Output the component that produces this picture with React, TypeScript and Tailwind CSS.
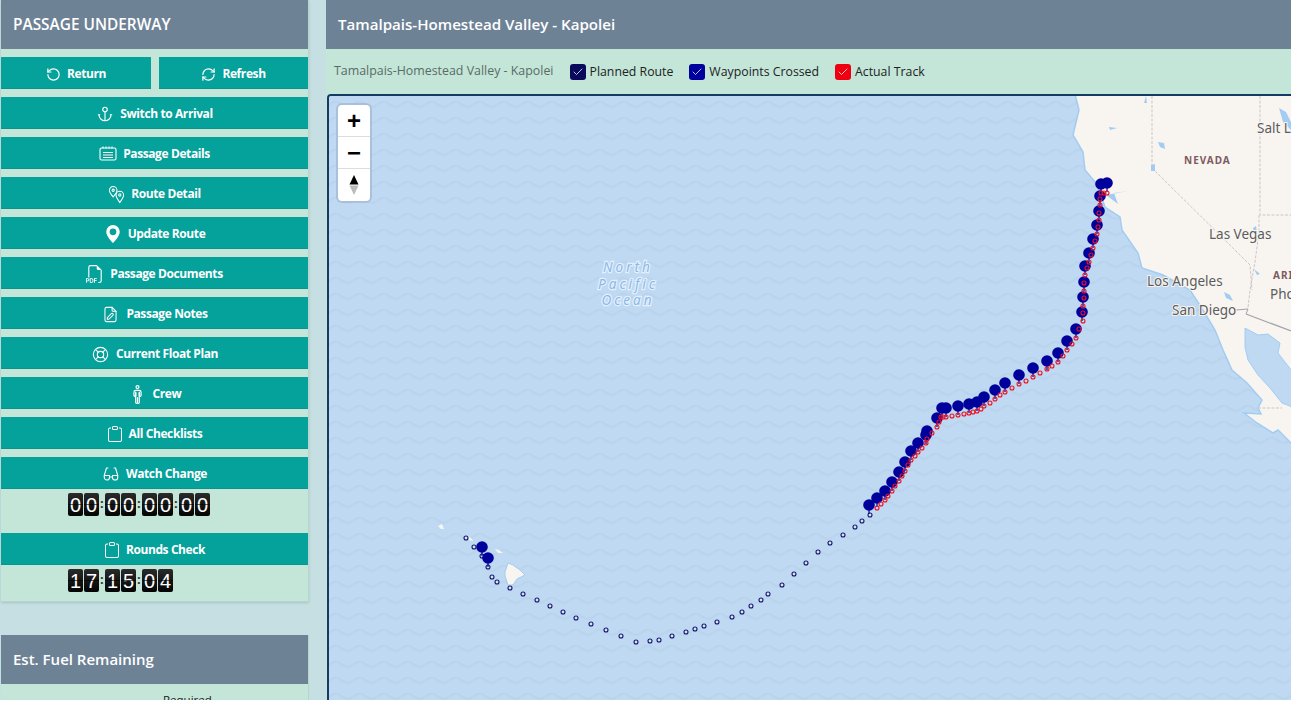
import type { ReactNode } from "react";
import { BsClipboard, BsFiletypePdf, BsGeoAltFill } from "react-icons/bs";
import { IoManOutline } from "react-icons/io5";
import { TbAnchor, TbEyeglass, TbFilePencil, TbLifebuoy } from "react-icons/tb";
import { Check, RefreshCw, RotateCcw } from "lucide-react";

const bigDots = [
  [1107, 183], [1101, 184], [1100, 196], [1099, 211], [1097, 225], [1093, 239], [1089, 253], [1085, 266], [1084, 282], [1083, 297], [1082, 312], [1076, 329], [1067, 341], [1058, 353], [1047, 361], [1033, 368], [1019, 375], [1005, 383], [995, 390], [984, 397], [977, 402], [969, 404], [958, 406], [946, 408], [942, 408], [937, 418], [927, 431], [926, 435], [918, 443], [911, 451], [905, 462], [899, 472], [892, 482], [885, 491], [877, 498], [869, 505], [482, 547], [488, 558],
];

const track = [
  [1101, 193], [1104, 193], [1107, 193], [1100, 199], [1100, 205], [1099, 213], [1099, 220], [1098, 227], [1097, 234], [1095, 241], [1093, 248], [1091, 255], [1089, 262], [1087, 268], [1085, 275], [1084, 283], [1084, 291], [1084, 298], [1083, 306], [1083, 313], [1083, 321], [1079, 329], [1076, 338], [1072, 344], [1067, 350], [1063, 356], [1058, 362], [1052, 366], [1047, 369], [1040, 373], [1033, 377], [1026, 381], [1019, 384], [1012, 388], [1005, 392], [1000, 395], [995, 399], [990, 403], [984, 406], [981, 409], [977, 411], [973, 412], [969, 413], [964, 414], [958, 415], [952, 416], [946, 417], [943, 417], [941, 417], [939, 422], [937, 427], [932, 433], [927, 439], [926, 443], [922, 448], [918, 452], [915, 456], [911, 460], [908, 465], [905, 471], [902, 476], [899, 481], [895, 486], [892, 491], [888, 496], [885, 500], [881, 504], [877, 508],
];

const planned = [
  [870, 515], [862, 521], [855, 527], [843, 535], [830, 543], [818, 552], [806, 563], [794, 574], [782, 585], [768, 594], [761, 600], [751, 606], [742, 612], [732, 617], [717, 622], [704, 626], [695, 629], [686, 632], [672, 636], [659, 640], [650, 641], [636, 642], [621, 636], [606, 630], [591, 624], [576, 618], [563, 612], [550, 606], [537, 600], [523, 594], [510, 588], [497, 582], [492, 577], [488, 567], [482, 556], [474, 547], [466, 538],
];

const land =
  "M1074 90 L1079 110 L1073 135 L1083 152 L1085 170 L1095 182 L1101 195 L1105 207 L1120 217 L1122 230 L1138 253 L1142 268 L1163 275 L1190 290 L1203 310 L1215 330 L1223 350 L1232 370 L1247 383 L1262 400 L1258 408 L1261 414 L1244 413 L1257 423 L1273 433 L1278 430 L1291 443 L1295 443 L1295 90 Z";
const gulf =
  "M1245 328 L1258 335 L1268 334 L1280 343 L1278 353 L1295 375 L1295 408 L1282 403 L1270 388 L1258 375 L1248 360 L1245 347 Z";

function MapCanvas() {
  return (
    <svg viewBox="329 96 962 604" className="block h-[604px] w-[962px]">
      <defs>
        <pattern id="waves" x="329" y="96" width="24" height="16" patternUnits="userSpaceOnUse">
          <path d="M0 9 Q6 3 12 8 T24 9" fill="none" stroke="#bad4ee" strokeWidth="2.5" />
        </pattern>
      </defs>
      <rect x="329" y="96" width="962" height="604" fill="#bfd9f2" />
      <rect x="329" y="96" width="962" height="604" fill="url(#waves)" />

      <path d={land} fill="#f8f5f1" stroke="#a2ccf2" strokeWidth="1.5" />
      <path d={gulf} fill="#bfd9f2" stroke="#a2ccf2" strokeWidth="1" />
      <path d="M508 563 L505 572 L505 576 L508 585 L513 585 L517 579 L525 575 L520 570 L513 565 Z" fill="#f8f5f1" stroke="#a2ccf2" strokeWidth="1" />
      <path d="M438 526 L442 524 L444 529 L441 529 Z M468 536 L472 539 L473 541 L469 540 Z M495 549 L499 550 L503 553 L498 553 Z M484 544 L489 545 L487 547 Z" fill="#f8f5f1" />

      <g fill="none" stroke="#c9c5c6" strokeWidth="1" strokeDasharray="3 1.5">
        <path d="M1152 96 L1152 168 L1250 265 L1252 290" />
        <path d="M1260 96 L1260 215 L1291 215" />
        <path d="M1259 215 L1259 232 L1255 262 L1250 290 L1248 308" />
        <path d="M1258 408 L1282 408" />
      </g>
      <path d="M1246 314 L1291 331" fill="none" stroke="#a5a2ad" strokeWidth="1.3" />
      <path d="M1236 310 L1248 309 L1246 314" fill="none" stroke="#a5a2ad" strokeWidth="1" />
      <g fill="#a2ccf2">
        <path d="M1146 96 L1147 103 L1144 103 Z" />
        <path d="M1109 127 L1117 128 L1110 130 Z" />
        <path d="M1158 142 L1164 143 L1165 149 L1160 147 Z" />
        <path d="M1151 165 L1155 164 L1155 171 L1151 171 Z" />
        <path d="M1279 108 L1286 112 L1291 122 L1291 130 L1283 122 Z" />
        <path d="M1253 228 L1256 226 L1257 233 L1254 232 Z" />
        <path d="M1254 269 L1260 274 L1257 275 Z" />
        <path d="M1224 292 L1230 295 L1233 301 L1226 298 Z" />
        <path d="M1106 195 L1128 191 L1114 193 L1118 204 L1110 198 Z" />
      </g>

      {planned.map(([x, y], i) => (
        <circle key={i} cx={x} cy={y} r="2" fill="#d6e4f6" stroke="#15156e" strokeWidth="1.1" />
      ))}
      {bigDots.map(([x, y], i) => (
        <path key={i} d={`M${x} ${y}V${y + 9}`} stroke="#00009c" strokeWidth="1.2" />
      ))}
      {bigDots.map(([x, y], i) => (
        <circle key={i} cx={x} cy={y} r="5.8" fill="#00009c" />
      ))}
      {track.map(([x, y], i) => (
        <circle key={i} cx={x} cy={y} r="2" fill="none" stroke="#ee1020" strokeWidth="1.1" />
      ))}

      <g fontFamily="'Noto Sans', sans-serif" fontSize="13.5" fill="#5c5c5c" stroke="#f8f5f1" strokeWidth="2" paintOrder="stroke">
        <text x="1257" y="133">Salt L</text>
        <text x="1209" y="239">Las Vegas</text>
        <text x="1147" y="286">Los Angeles</text>
        <text x="1172" y="315">San Diego</text>
        <text x="1270" y="299">Pho</text>
      </g>
      <g fontFamily="'Noto Sans', sans-serif" fontSize="10" fontWeight="700" letterSpacing="1" fill="#7d5a5f" stroke="#f8f5f1" strokeWidth="2" paintOrder="stroke">
        <text x="1184" y="164">NEVADA</text>
        <text x="1273" y="279">ARI</text>
      </g>
      <g fontFamily="'Noto Sans', sans-serif" fontSize="13.5" fontStyle="italic" letterSpacing="3" fill="#8cb8ea" stroke="#e4f0fb" strokeWidth="2.5" paintOrder="stroke" textAnchor="middle">
        <text x="628" y="272">North</text>
        <text x="628" y="289">Pacific</text>
        <text x="628" y="305">Ocean</text>
      </g>
    </svg>
  );
}

function CalendarLines() {
  return (
    <svg viewBox="0 0 18 18" className="h-[18px] w-[18px]" fill="none" stroke="currentColor" strokeWidth="1.1">
      <rect x="1" y="3" width="16" height="12" rx="1.5" />
      <path d="M4 1.5V3.5M7 1.5V3.5M10 1.5V3.5M13 1.5V3.5M4 7.5H14M4 10H14M4 12.5H14" />
    </svg>
  );
}

function TwoPins() {
  return (
    <svg viewBox="0 0 18 20" className="h-[19px] w-[17px]" fill="none" stroke="currentColor" strokeWidth="1.1">
      <path d="M5.5 1.5a4 4 0 0 1 4 4c0 2.2-2.2 5-4 7-1.8-2-4-4.8-4-7a4 4 0 0 1 4-4z" />
      <circle cx="5.5" cy="5.5" r="1.2" />
      <path d="M12.5 6.5a4 4 0 0 1 4 4c0 2.5-2.2 5.5-4 8-1.8-2.5-4-5.5-4-8a4 4 0 0 1 4-4z" />
      <circle cx="12.5" cy="10.5" r="1.2" />
    </svg>
  );
}

const buttons: { label: string; icon: ReactNode }[] = [
  { label: "Switch to Arrival", icon: <TbAnchor size={18} strokeWidth={1.5} /> },
  { label: "Passage Details", icon: <CalendarLines /> },
  { label: "Route Detail", icon: <TwoPins /> },
  { label: "Update Route", icon: <BsGeoAltFill size={18} /> },
  { label: "Passage Documents", icon: <BsFiletypePdf size={18} /> },
  { label: "Passage Notes", icon: <TbFilePencil size={19} strokeWidth={1.3} /> },
  { label: "Current Float Plan", icon: <TbLifebuoy size={19} strokeWidth={1.4} /> },
  { label: "Crew", icon: <IoManOutline size={19} /> },
  { label: "All Checklists", icon: <BsClipboard size={16} /> },
  { label: "Watch Change", icon: <TbEyeglass size={18} strokeWidth={1.4} /> },
];

function ActionButton({ label, icon, className = "" }: { label: string; icon: ReactNode; className?: string }) {
  return (
    <button type="button" className={`flex h-8 items-center justify-center gap-[6px] border-b border-[#0b948f] bg-[#05a19b] pt-[3px] text-[12px] font-bold tracking-[-0.4px] text-white ${className}`}>
      {icon}
      {label}
    </button>
  );
}

function FlipClock({ groups }: { groups: string[] }) {
  return (
    <div className="flex gap-[6px]">
      {groups.map((group, i) => (
        <div key={i} className="relative flex gap-px">
          {group.split("").map((digit, j) => (
            <span key={j} className="relative flex h-[23px] w-[15px] items-center justify-center rounded-[2px] bg-gradient-to-b from-[#2b2b2b] to-[#050505] font-['Liberation_Sans',sans-serif] text-[20px] leading-none text-white">
              {digit}
              <span className="absolute inset-x-0 top-[11px] h-px bg-black/60" />
            </span>
          ))}
          {i > 0 && <span className="absolute left-[-5px] top-[4px] text-[13px] font-bold leading-[13px] text-[#333]">:</span>}
        </div>
      ))}
    </div>
  );
}

function Legend({ color, label }: { color: string; label: string }) {
  return (
    <label className="flex items-center gap-[4px] text-[12.3px] text-[#222]">
      <span className={`flex h-4 w-4 items-center justify-center rounded-[3px] ${color}`}>
        <Check size={12} className="text-white" strokeWidth={1.5} />
      </span>
      <span className="pt-px">{label}</span>
    </label>
  );
}

export default function App() {
  return (
    <div className="h-[717px] overflow-hidden bg-white font-['Open_Sans',sans-serif]">
      <div className="flex h-[700px] gap-[17px] overflow-hidden bg-[#c5dfe2] pl-px">
        <aside className="w-[308px] shrink-0">
          <section className="h-[602px] border-r border-b border-[#b7d6cb] bg-[#c3e6d8] shadow-sm">
            <h2 className="flex h-[49px] items-center bg-[#6e8296] px-3 text-[15.4px] font-semibold text-white">PASSAGE UNDERWAY</h2>
            <div className="flex flex-col gap-2 pt-2">
              <div className="flex gap-2">
                <ActionButton label="Return" icon={<RotateCcw size={15} strokeWidth={1.9} />} className="w-[150px]" />
                <ActionButton label="Refresh" icon={<RefreshCw size={15} strokeWidth={1.9} />} className="flex-1" />
              </div>
              {buttons.map((b) => (
                <ActionButton key={b.label} {...b} />
              ))}
            </div>
            <div className="h-[44px] pl-[67px] pt-1">
              <FlipClock groups={["00", "00", "00", "00"]} />
            </div>
            <ActionButton label="Rounds Check" icon={<BsClipboard size={16} />} className="w-full" />
            <div className="pl-[67px] pt-1">
              <FlipClock groups={["17", "15", "04"]} />
            </div>
          </section>
          <section className="mt-[33px] border-r border-[#b7d6cb] bg-[#c3e6d8]">
            <h2 className="flex h-[49px] items-center bg-[#6e8296] px-3 text-[15px] font-semibold text-white">Est. Fuel Remaining</h2>
            <div className="pl-[162px] pt-2 text-[11.5px] leading-4 text-[#222]">Required</div>
          </section>
        </aside>

        <main className="min-w-0 flex-1 bg-[#c3e6d8]">
          <h1 className="flex h-[49px] items-center bg-[#6e8296] px-3 text-[15.1px] font-semibold text-white">Tamalpais-Homestead Valley - Kapolei</h1>
          <div className="flex h-[45px] items-center gap-4 px-2 text-[12.4px]">
            <span className="text-[#5a6b66]">Tamalpais-Homestead Valley - Kapolei</span>
            <Legend color="bg-[#0a0a5c]" label="Planned Route" />
            <Legend color="bg-[#00009c]" label="Waypoints Crossed" />
            <Legend color="bg-[#ee0010]" label="Actual Track" />
          </div>
          <div className="relative ml-px h-[606px] overflow-hidden rounded-tl-[4px] border-l-2 border-t-2 border-[#143a66]">
            <MapCanvas />
            <div className="absolute left-[9px] top-[9px] flex w-[32px] flex-col divide-y divide-[#ddd] rounded-[4px] bg-white shadow-[0_0_0_2px_rgba(150,170,200,0.5)]">
              <button type="button" className="flex h-8 items-center justify-center font-['Liberation_Sans',sans-serif] text-[24px] font-bold leading-none text-black">+</button>
              <button type="button" className="flex h-8 items-center justify-center font-['Liberation_Sans',sans-serif] text-[24px] font-bold leading-none text-black">−</button>
              <button type="button" className="flex h-8 items-center justify-center">
                <svg viewBox="0 0 10 22" className="h-[22px] w-[10px]">
                  <path d="M5 1 L9.5 10.5 H0.5 Z" fill="#000" />
                  <path d="M5 21 L9.5 11.5 H0.5 Z" fill="#bbb" />
                </svg>
              </button>
            </div>
          </div>
        </main>
      </div>
    </div>
  );
}
